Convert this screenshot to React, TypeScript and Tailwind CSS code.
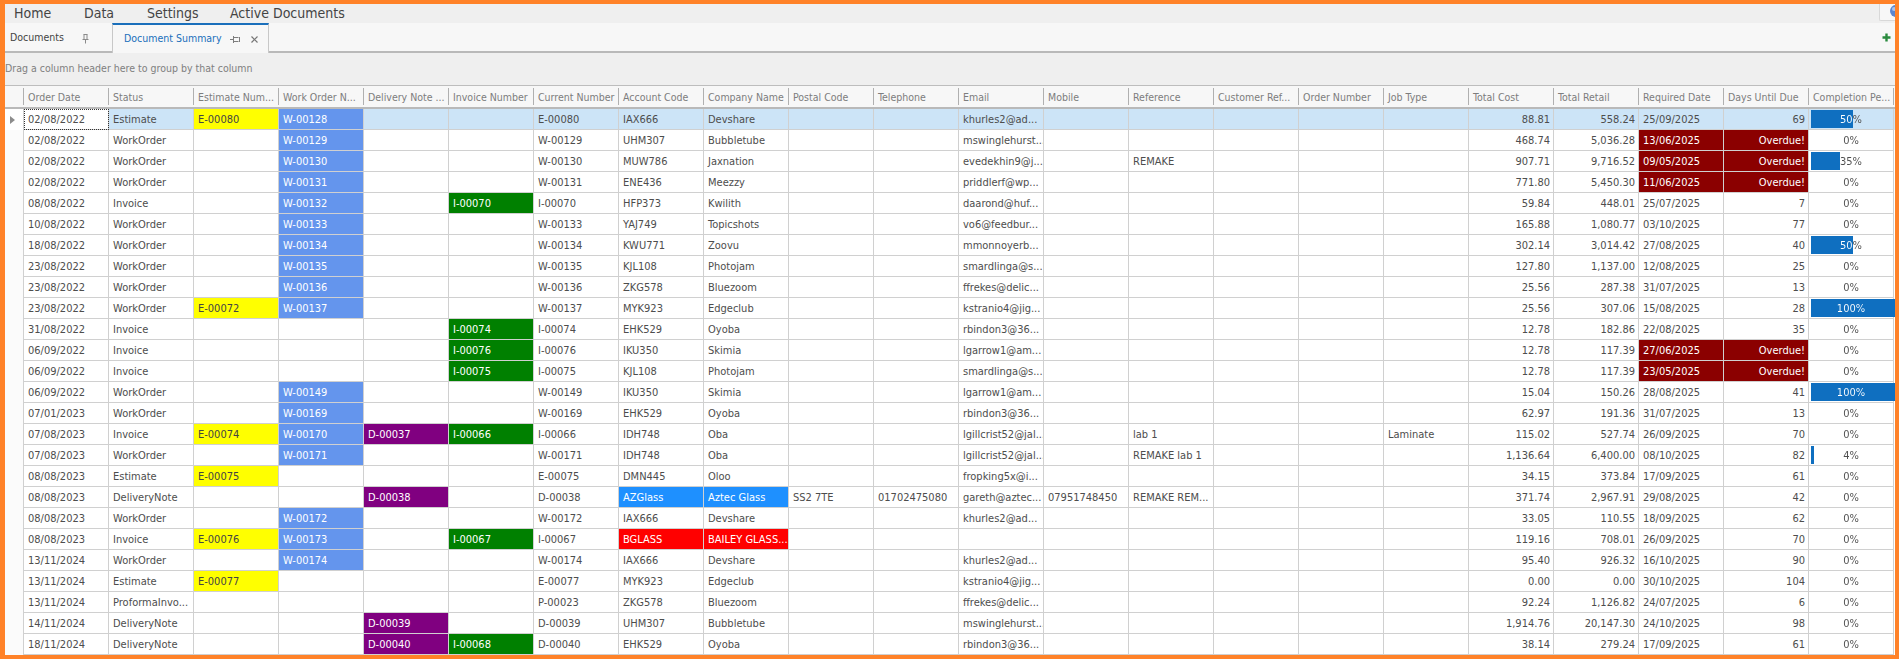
/**
 * Document Summary
 * Grid of documents with status colouring
 */

const columns = [
  'Order Date', 'Status', 'Estimate Num...', 'Work Order N...', 'Delivery Note ...', 'Invoice Number',
  'Current Number', 'Account Code', 'Company Name', 'Postal Code', 'Telephone', 'Email', 'Mobile',
  'Reference', 'Customer Ref...', 'Order Number', 'Job Type', 'Total Cost', 'Total Retail',
  'Required Date', 'Days Until Due', 'Completion Pe...',
];

// one line per row, columns in the same order as above
const rows = [
  '02/08/2022|Estimate|E-00080|W-00128|||E-00080|IAX666|Devshare|||khurles2@ad...|||||| 88.81|558.24|25/09/2025|69|50',
  '02/08/2022|WorkOrder||W-00129|||W-00129|UHM307|Bubbletube|||mswinglehurst...||||||468.74|5,036.28|13/06/2025|Overdue!|0',
  '02/08/2022|WorkOrder||W-00130|||W-00130|MUW786|Jaxnation|||evedekhin9@j...||REMAKE||||907.71|9,716.52|09/05/2025|Overdue!|35',
  '02/08/2022|WorkOrder||W-00131|||W-00131|ENE436|Meezzy|||priddlerf@wp...||||||771.80|5,450.30|11/06/2025|Overdue!|0',
  '08/08/2022|Invoice||W-00132||I-00070|I-00070|HFP373|Kwilith|||daarond@huf...||||||59.84|448.01|25/07/2025|7|0',
  '10/08/2022|WorkOrder||W-00133|||W-00133|YAJ749|Topicshots|||vo6@feedbur...||||||165.88|1,080.77|03/10/2025|77|0',
  '18/08/2022|WorkOrder||W-00134|||W-00134|KWU771|Zoovu|||mmonnoyerb...||||||302.14|3,014.42|27/08/2025|40|50',
  '23/08/2022|WorkOrder||W-00135|||W-00135|KJL108|Photojam|||smardlinga@s...||||||127.80|1,137.00|12/08/2025|25|0',
  '23/08/2022|WorkOrder||W-00136|||W-00136|ZKG578|Bluezoom|||ffrekes@delic...||||||25.56|287.38|31/07/2025|13|0',
  '23/08/2022|WorkOrder|E-00072|W-00137|||W-00137|MYK923|Edgeclub|||kstranio4@jig...||||||25.56|307.06|15/08/2025|28|100',
  '31/08/2022|Invoice||||I-00074|I-00074|EHK529|Oyoba|||rbindon3@36...||||||12.78|182.86|22/08/2025|35|0',
  '06/09/2022|Invoice||||I-00076|I-00076|IKU350|Skimia|||lgarrow1@am...||||||12.78|117.39|27/06/2025|Overdue!|0',
  '06/09/2022|Invoice||||I-00075|I-00075|KJL108|Photojam|||smardlinga@s...||||||12.78|117.39|23/05/2025|Overdue!|0',
  '06/09/2022|WorkOrder||W-00149|||W-00149|IKU350|Skimia|||lgarrow1@am...||||||15.04|150.26|28/08/2025|41|100',
  '07/01/2023|WorkOrder||W-00169|||W-00169|EHK529|Oyoba|||rbindon3@36...||||||62.97|191.36|31/07/2025|13|0',
  '07/08/2023|Invoice|E-00074|W-00170|D-00037|I-00066|I-00066|IDH748|Oba|||lgillcrist52@jal...||lab 1|||Laminate|115.02|527.74|26/09/2025|70|0',
  '07/08/2023|WorkOrder||W-00171|||W-00171|IDH748|Oba|||lgillcrist52@jal...||REMAKE lab 1||||1,136.64|6,400.00|08/10/2025|82|4',
  '08/08/2023|Estimate|E-00075||||E-00075|DMN445|Oloo|||fropking5x@i...||||||34.15|373.84|17/09/2025|61|0',
  '08/08/2023|DeliveryNote|||D-00038||D-00038|AZGlass|Aztec Glass|SS2 7TE|01702475080|gareth@aztec...|07951748450|REMAKE REM...||||371.74|2,967.91|29/08/2025|42|0',
  '08/08/2023|WorkOrder||W-00172|||W-00172|IAX666|Devshare|||khurles2@ad...||||||33.05|110.55|18/09/2025|62|0',
  '08/08/2023|Invoice|E-00076|W-00173||I-00067|I-00067|BGLASS|BAILEY GLASS...|||||||||119.16|708.01|26/09/2025|70|0',
  '13/11/2024|WorkOrder||W-00174|||W-00174|IAX666|Devshare|||khurles2@ad...||||||95.40|926.32|16/10/2025|90|0',
  '13/11/2024|Estimate|E-00077||||E-00077|MYK923|Edgeclub|||kstranio4@jig...||||||0.00|0.00|30/10/2025|104|0',
  '13/11/2024|ProformaInvo...|||||P-00023|ZKG578|Bluezoom|||ffrekes@delic...||||||92.24|1,126.82|24/07/2025|6|0',
  '14/11/2024|DeliveryNote|||D-00039||D-00039|UHM307|Bubbletube|||mswinglehurst...||||||1,914.76|20,147.30|24/10/2025|98|0',
  '18/11/2024|DeliveryNote|||D-00040|I-00068|D-00040|EHK529|Oyoba|||rbindon3@36...||||||38.14|279.24|17/09/2025|61|0',
].map((line) => line.split('|').map((value) => value.trim()));

function cellFill(col: number, row: string[]) {
  const value = row[col];
  if (!value) return '';
  if (col === 2) return 'bg-[#ffff00] text-[#444444]';
  if (col === 3) return 'bg-[#6495ed] text-white';
  if (col === 4) return 'bg-[#800080] text-white';
  if (col === 5) return 'bg-[#008000] text-white';
  if (col === 7 || col === 8) {
    if (row[7] === 'AZGlass') return 'bg-[#1e90ff] text-white';
    if (row[7] === 'BGLASS') return 'bg-[#ff0000] text-white';
  }
  if ((col === 19 || col === 20) && row[20] === 'Overdue!') return 'bg-[#8b0000] text-white';
  return '';
}

function Completion({ percent }: { percent: number }) {
  const barWidth = (percent / 100) * 84;
  return (
    <div className="relative h-[21px] border-r border-b border-[#d0d0d0] text-center leading-[21px]">
      {percent > 0 && (
        <div className="absolute left-[2px] top-[1px] h-[18px] bg-[#0f6fc0]" style={{ width: `${barWidth}px` }} />
      )}
      {/* label turns white where the bar runs under it */}
      <div
        className="relative h-[20px] overflow-hidden bg-clip-text text-transparent"
        style={{ backgroundImage: `linear-gradient(90deg, #ffffff ${barWidth + 2}px, #4d4d4d ${barWidth + 2}px)` }}
      >
        {percent}%
      </div>
    </div>
  );
}

function PinIcon() {
  return (
    <svg width="11" height="11" viewBox="0 0 11 11" fill="none" stroke="#8a8a8a" strokeWidth="1">
      <path d="M3.5 1.5h4M4 1.5v4.5M7 1.5v4.5M2.5 6.5h6M5.5 6.5v4" />
    </svg>
  );
}

function FlatPinIcon() {
  return (
    <svg width="11" height="11" viewBox="0 0 11 11" fill="none" stroke="#7d7d7d" strokeWidth="1">
      <path d="M0 5.5h3M3.5 2v7M3.5 3.5h5M3.5 7.5h5M9.5 3v5" />
    </svg>
  );
}

export default function App() {
  return (
    <div
      className="flex h-[659px] w-[1899px] flex-col overflow-hidden border-t-4 border-r-4 border-b-4 border-l-[5px] border-[#ff8228] bg-white text-[11px] text-[#4d4d4d]"
      style={{ fontFamily: '"DejaVu Sans Condensed", "Noto Sans", sans-serif' }}
    >
      {/* menu */}
      <div className="flex h-[19px] items-center bg-[#efefef] text-[14px] leading-[19px] text-[#444444]">
        <span className="ml-[9px] w-[70px]">Home</span>
        <span className="w-[63px]">Data</span>
        <span className="w-[83px]">Settings</span>
        <span>Active Documents</span>
        <div className="ml-auto flex h-[17px] w-[16px] self-start overflow-hidden rounded-bl-[2px] border-b border-l border-[#d8d8d8] bg-[#f7f7f7] pl-[10px] pt-[1px]">
          <svg width="12" height="12" viewBox="0 0 12 12" className="shrink-0">
            <circle cx="6" cy="6" r="6" fill="#5b86cf" />
            <circle cx="4" cy="4" r="2" fill="#a9c4ee" />
          </svg>
        </div>
      </div>

      {/* tabs */}
      <div className="flex h-[30px] items-stretch border-b-2 border-[#b9b9b9] bg-[#f7f7f7] text-[10.5px]">
        <div className="flex w-[107px] items-center pt-[2px] pl-[5px] text-[#444444]">
          <span className="w-[70px]">Documents</span>
          <PinIcon />
        </div>
        <div className="-mb-[2px] flex w-[157px] items-center border-x border-t-2 border-[#c8c8c8] border-t-[#1a6fbb] bg-[#f7f7f7] pl-[11px] text-[#1a6fbb]">
          <span className="w-[106px]">Document Summary</span>
          <FlatPinIcon />
          <svg width="9" height="9" viewBox="0 0 9 9" stroke="#777777" strokeWidth="1.2" className="ml-[9px]">
            <path d="M1.5 1.5l6 6M7.5 1.5l-6 6" />
          </svg>
        </div>
        <div className="ml-auto flex items-center pr-[4px]">
          <svg width="9" height="9" viewBox="0 0 9 9" fill="#2a8a3e">
            <path d="M3.3 0.5h2.4v2.8h2.8v2.4h-2.8v2.8h-2.4v-2.8h-2.8v-2.4h2.8z" />
          </svg>
        </div>
      </div>

      {/* group panel */}
      <div className="flex h-[33px] items-center border-b border-[#bdbdbd] bg-[#efefef] text-[10.5px] text-[#808080]">
        Drag a column header here to group by that column
      </div>

      {/* header */}
      <div className="grid h-[23px] grid-cols-[19px_repeat(22,85px)] border-b-2 border-[#b9b9b9] bg-[#f7f7f7] text-[10.5px] text-[#7d7d7d]">
        <div className="my-[2px] border-r border-[#b0b0b0]" />
        {columns.map((name) => (
          <div key={name} className="my-[2px] truncate border-r border-[#b0b0b0] pl-[4px] leading-[18px]">
            {name}
          </div>
        ))}
      </div>

      {/* rows */}
      {rows.map((row, index) => {
        const selected = index === 0;
        return (
          <div
            key={index}
            className={`grid h-[21px] shrink-0 grid-cols-[19px_repeat(22,85px)] grid-rows-[21px] ${selected ? 'bg-[#cce4f7]' : ''}`}
          >
            <div className={`flex items-center border-r border-[#d0d0d0] pl-[5px] ${selected ? 'bg-white' : 'bg-[#fbfbfb]'}`}>
              {selected && (
                <svg width="5" height="8" viewBox="0 0 5 8" fill="#8c8c8c">
                  <path d="M0 0l5 4-5 4z" />
                </svg>
              )}
            </div>
            {row.map((value, col) => {
              if (col === 21) return <Completion key={col} percent={Number(value)} />;
              const numeric = col === 17 || col === 18 || col === 20;
              const focused = selected && col === 0;
              return (
                <div
                  key={col}
                  className={`h-[21px] overflow-hidden border-r border-b border-[#d0d0d0] whitespace-nowrap leading-[21px] ${
                    numeric ? 'pr-[3px] text-right' : 'pl-[4px]'
                  } ${cellFill(col, row)} ${focused ? 'bg-white outline-1 -outline-offset-1 outline-dotted outline-[#333333]' : ''}`}
                >
                  {value}
                </div>
              );
            })}
          </div>
        );
      })}
    </div>
  );
}
